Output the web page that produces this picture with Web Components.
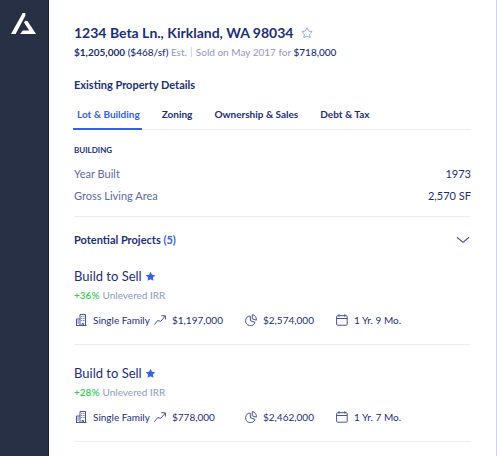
<!DOCTYPE html>
<html lang="en">
<head>
<meta charset="utf-8">
<meta name="viewport" content="width=device-width, initial-scale=1">
<title>1234 Beta Ln.</title>
<style>
:root{--ink:#1b2f7b;--soft:#5a6aa5;--icon:#44559a;--muted:#8e99c2;--blue:#3560ee;--green:#35d052;--line:#ecedf0}
body{margin:0;background:#fff;color:var(--ink);font-family:Lato,"Liberation Sans",sans-serif;font-size:10px;line-height:14px}
</style>
</head>
<body>
<app-shell>
  <property-header price="$1,205,000" rate="($468/sf)" sold="May 2017" sold-price="$718,000">1234 Beta Ln., Kirkland, WA 98034</property-header>
  <property-details>
    <detail-row label="Year Built">1973</detail-row>
    <detail-row label="Gross Living Area">2,570 SF</detail-row>
  </property-details>
  <project-list count="5">
    <project-card irr="+36%" type="Single Family" profit="$1,197,000" cost="$2,574,000" term="1 Yr. 9 Mo.">Build to Sell</project-card>
    <project-card irr="+28%" type="Single Family" profit="$778,000" cost="$2,462,000" term="1 Yr. 7 Mo.">Build to Sell</project-card>
  </project-list>
</app-shell>
<script>
const base = `*{box-sizing:border-box}h1,h2,h3,p{margin:0;font-weight:inherit;font-size:inherit}
button{font:inherit;color:inherit;background:none;border:0;padding:0;margin:0;display:block}svg{display:block}`;

class BaseElement extends HTMLElement {
  connectedCallback() {
    if (this.shadowRoot) return;
    this.attachShadow({mode: 'open'}).innerHTML = `<style>${base}${this.styles()}</style>${this.markup()}`;
  }
  attr(name) { return this.getAttribute(name) || ''; }
}

const icons = {
  building: '<path d="M1 11.5h10.5M1.5 11.5v-6.5H5M5 11.5v-11h5.5v11M7 11.5V9.5h1.5v2M2.5 7h1.5M2.5 9h1.5M6.3 2.5h1M8.4 2.5h1M6.3 4.5h1M8.4 4.5h1M6.3 6.5h1M8.4 6.5h1"/>',
  trend: '<path d="M.4 10.6L3.6 6.6 6.8 7.3 11.3 2M7.2 1.8h4.2v3.7"/>',
  pie: '<path d="M5.2 2A4.8 4.8 0 1 0 10 8.3L5.5 6.8z"/><path d="M7.3.6v4.2l4 1.4A4.7 4.7 0 0 0 7.3.6z"/>',
  calendar: '<rect x=".6" y="1.7" width="10.6" height="9.5" rx="1"/><path d="M.6 4.5h10.6M3 .2v2.5M8.8.2v2.5"/>',
  star: '<path d="M6 .8l1.6 3.3 3.6.5-2.6 2.5.6 3.6L6 9 2.8 10.7l.6-3.6L.8 4.6l3.6-.5z"/>',
  chevron: '<path d="M.8 3.7L6 8l5.2-4.3"/>'
};

class UiIcon extends BaseElement {
  styles() { return `:host{display:block;flex:none;width:12px;height:12px;color:var(--icon)}
    svg{width:100%;height:100%;fill:none;stroke:currentColor;stroke-width:1;stroke-linejoin:round}
    :host([filled]) svg{fill:currentColor;stroke:none}`; }
  markup() { return `<svg viewBox="0 0 12 12" aria-hidden="true">${icons[this.attr('name')]}</svg>`; }
}

class AppShell extends BaseElement {
  styles() { return `:host{display:grid;grid-template-columns:49px minmax(0,1fr);min-height:100vh}
    nav{background:#273044;border-right:1px solid #1d2433;padding:13px 0 0 11px}
    nav a{display:block;width:26px}
    nav svg{width:26px;height:22px}
    main{padding:24px 25px 0;border-right:1px solid #ccd4ec}`; }
  markup() { return `<nav aria-label="Main"><a href="#" aria-label="Home"><svg viewBox="0 0 26 22" fill="#fff">
    <path d="M11.7 0h2.6v2.7L4.6 21H0z"/><path d="M14.4 7.7L16.5 8 25 21H9.1l2.7-3.4h6.5L13 9.4z"/></svg></a></nav><main><slot></slot></main>`; }
}

class PropertyHeader extends BaseElement {
  styles() { return `:host{display:block}
    .title{display:flex;align-items:center;gap:8px}
    h1{font-size:14px;line-height:18px;font-weight:700}
    .title ui-icon{color:#97abf2}
    .meta{display:flex;align-items:center;margin-top:3px;color:var(--muted);white-space:nowrap}
    b{font-weight:700;color:var(--ink)}span{font-weight:500;color:var(--ink)}
    .sold{margin-left:4px;padding-left:4px;line-height:10px;border-left:1px solid #d3d8e8}`; }
  markup() { return `<div class="title"><h1><slot></slot></h1><button aria-label="Save property"><ui-icon name="star"></ui-icon></button></div>
    <div class="meta"><p><b>${this.attr('price')}</b> <span>${this.attr('rate')}</span> Est.</p>
    <p class="sold">Sold on ${this.attr('sold')} for <span>${this.attr('sold-price')}</span></p></div>`; }
}

class PropertyDetails extends BaseElement {
  styles() { return `:host{display:block;margin-top:18px;padding-bottom:9px;border-bottom:1px solid var(--line)}
    h2{font-size:11px;line-height:16px;font-weight:700}
    .tabs{display:flex;gap:16px;margin:7px 0 0 -1px;border-bottom:1px solid var(--line)}
    button{padding:7px 2px 7px 4px;font-weight:700;border-bottom:2px solid transparent;margin-bottom:-1px;white-space:nowrap}
    button[aria-selected=true]{color:var(--blue);border-color:var(--blue)}
    h3{font-size:8px;line-height:12px;font-weight:700;margin:14px 0 7px}`; }
  markup() { return `<h2>Existing Property Details</h2>
    <div class="tabs" role="tablist"><button role="tab" aria-selected="true">Lot &amp; Building</button><button role="tab">Zoning</button><button role="tab">Ownership &amp; Sales</button><button role="tab">Debt &amp; Tax</button></div>
    <h3>BUILDING</h3><slot></slot>`; }
}

class DetailRow extends BaseElement {
  styles() { return `:host{display:flex;justify-content:space-between;font-size:11px;line-height:22px}span{color:var(--soft)}`; }
  markup() { return `<span>${this.attr('label')}</span><slot></slot>`; }
}

class ProjectList extends BaseElement {
  styles() { return `:host{display:block;padding-top:15px}
    header{display:flex;justify-content:space-between;align-items:center;padding-right:1px}
    h2{font-size:11px;line-height:16px;font-weight:700}h2 span{color:var(--blue)}
    ui-icon{width:14px;height:14px}`; }
  markup() { return `<header><h2>Potential Projects <span>(${this.attr('count')})</span></h2><button aria-label="Toggle projects"><ui-icon name="chevron"></ui-icon></button></header><slot></slot>`; }
}

class ProjectCard extends BaseElement {
  styles() { return `:host{display:block;padding:20px 0 17px;border-bottom:1px solid var(--line)}
    .title{display:flex;align-items:center;gap:3px}
    h3{font-size:13px;line-height:16px}
    .title ui-icon{width:11px;height:11px;color:var(--blue)}
    .irr{margin-top:4px;color:var(--muted)}b{font-weight:600;color:var(--green);margin-right:3px}
    .stats{display:grid;grid-template-columns:79px 91px 91px auto;margin-top:11px;padding-left:1px}
    .stats div{display:flex;align-items:center;gap:6px;white-space:nowrap}`; }
  markup() {
    const stat = (icon, key) => `<div><ui-icon name="${icon}"></ui-icon><span>${this.attr(key)}</span></div>`;
    return `<div class="title"><h3><slot></slot></h3><button aria-label="Saved project"><ui-icon name="star" filled></ui-icon></button></div>
      <p class="irr"><b>${this.attr('irr')}</b>Unlevered IRR</p>
      <div class="stats">${stat('building','type')}${stat('trend','profit')}${stat('pie','cost')}${stat('calendar','term')}</div>`;
  }
}

customElements.define('ui-icon', UiIcon);
customElements.define('app-shell', AppShell);
customElements.define('property-header', PropertyHeader);
customElements.define('property-details', PropertyDetails);
customElements.define('detail-row', DetailRow);
customElements.define('project-list', ProjectList);
customElements.define('project-card', ProjectCard);
</script>
</body>
</html>
